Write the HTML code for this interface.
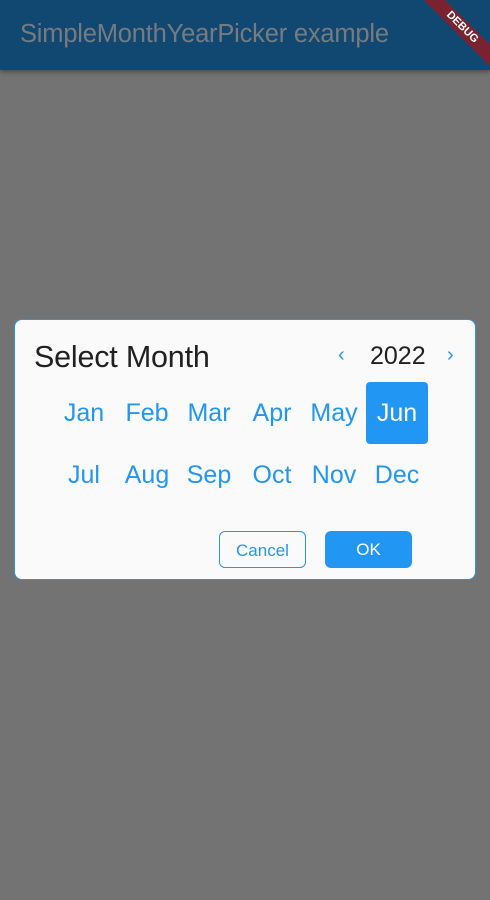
<!DOCTYPE html>
<html><head><style>
body{margin:0;width:490px;height:900px;background:#737373;position:relative;overflow:hidden;font-family:"Liberation Sans",Roboto,sans-serif}
.bar{position:absolute;left:0;top:0;width:490px;height:70px;background:#114872;box-shadow:0 2px 4px rgba(0,0,0,.35)}
.title{position:absolute;left:20px;top:20px;font-size:25.5px;color:#777b80;letter-spacing:-0.2px}
.banner{position:absolute;left:414px;top:20px;width:96px;height:15px;background:#7a2230;transform:rotate(45deg);color:#fff;font-size:11px;font-weight:bold;text-align:center;line-height:15px}
.dlg{position:absolute;left:14px;top:319px;width:460px;height:259px;background:#fafafa;border:1px solid #2196f3;border-radius:8px}
.h{position:absolute;left:19px;top:20px;font-size:30.5px;color:#212121;letter-spacing:-0.2px}
.yr{position:absolute;left:355px;top:22px;font-size:25px;color:#212121}
.ch{position:absolute;top:24px;font-size:20px;color:#2196f3}
.m{position:absolute;width:62px;height:62px;line-height:62px;text-align:center;font-size:25px;color:#2196f3;border-radius:4px}
.sel{background:#2196f3;color:#fff}
.btn{position:absolute;top:211px;width:87px;height:37px;line-height:37px;text-align:center;font-size:17px;border-radius:6px;box-sizing:border-box}
</style></head><body>
<div class="bar"><div class="title">SimpleMonthYearPicker example</div><div class="banner">DEBUG</div></div>
<div class="dlg">
<div class="h">Select Month</div>
<div class="ch" style="left:323px">‹</div>
<div class="yr">2022</div>
<div class="ch" style="left:432px">›</div>
<div class="m" style="left:38px;top:62px">Jan</div>
<div class="m" style="left:101px;top:62px">Feb</div>
<div class="m" style="left:163px;top:62px">Mar</div>
<div class="m" style="left:226px;top:62px">Apr</div>
<div class="m" style="left:288px;top:62px">May</div>
<div class="m sel" style="left:351px;top:62px">Jun</div>
<div class="m" style="left:38px;top:124px">Jul</div>
<div class="m" style="left:101px;top:124px">Aug</div>
<div class="m" style="left:163px;top:124px">Sep</div>
<div class="m" style="left:226px;top:124px">Oct</div>
<div class="m" style="left:288px;top:124px">Nov</div>
<div class="m" style="left:351px;top:124px">Dec</div>
<div class="btn" style="left:204px;border:1px solid #2196f3;color:#2196f3">Cancel</div>
<div class="btn" style="left:310px;background:#2196f3;color:#fff">OK</div>
</div>
</body></html>
